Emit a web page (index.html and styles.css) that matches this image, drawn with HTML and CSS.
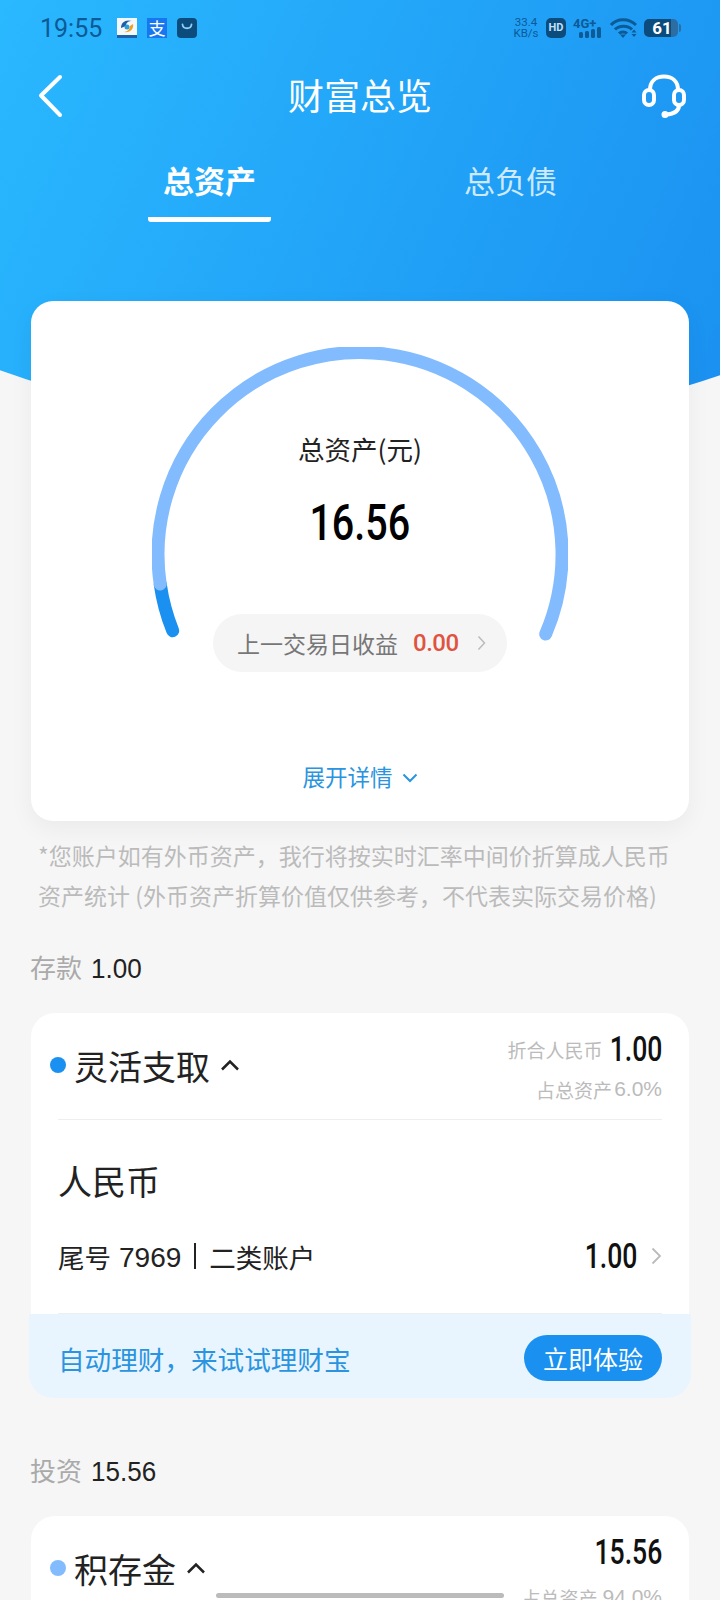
FILE: index.html
```html
<!DOCTYPE html>
<html lang="zh-CN">
<head>
    <meta charset="UTF-8">
    <meta name="viewport" content="width=device-width, initial-scale=1.0">
    <title>财富总览</title>
    <link rel="stylesheet" href="styles.css">
</head>
<body>
    <div class="page">
        <header class="hero">
            <div class="status-bar">
                <div class="status-left">
                    <span class="clock">19:55</span>
                    <svg class="app-icon" viewBox="0 0 20 20">
                        <rect width="20" height="20" fill="#f4f8fb"/>
                        <rect y="17" width="20" height="3" fill="#1d5fa8"/>
                        <path d="M4 10C4 4 9 1 15 3c-3 0-6 1-6 5z" fill="#1d5fa8"/>
                        <path d="M16 6c1 5-3 9-9 8 3-.5 6-2 6-6z" fill="#f0a01e"/>
                        <circle cx="10" cy="9" r="2.500" fill="#2a9fd8"/>
                    </svg>
                    <span class="app-icon alipay">支</span>
                    <svg class="app-icon" viewBox="0 0 20 20">
                        <rect width="20" height="20" rx="4" fill="#0c4c7c"/>
                        <path d="M5.500 6.500c.5 5 8.500 5 9 0" fill="none" stroke="#8ad0f8" stroke-width="1.800" stroke-linecap="round"/>
                    </svg>
                </div>
                <div class="status-right">
                    <span class="net-speed">33.4<br>KB/s</span>
                    <span class="hd">HD</span>
                    <svg class="signal" width="30" height="24" viewBox="0 0 30 24">
                        <text x="0" y="12" class="signal-text">4G+</text>
                        <rect x="6" y="16" width="4" height="6" rx="1.500"/>
                        <rect x="12" y="15" width="4" height="7" rx="1.500"/>
                        <rect x="18" y="13" width="4" height="9" rx="1.500"/>
                        <rect x="24" y="11" width="4" height="11" rx="1.500"/>
                    </svg>
                    <svg class="wifi" width="27" height="20" viewBox="0 0 27 20">
                        <path d="M1 7c6-7 18-7 25 0M5 11.500c4-4.500 13-4.500 17 0M9 15.500c2-2 6-2 8 0" fill="none" stroke="#0c5a96" stroke-width="3"/>
                        <path d="M10 16.500h6l-3 3.500zM21.500 14.500l2.500-3 2.500 3zM21.500 16h5L24 19z" fill="#0c5a96"/>
                    </svg>
                    <span class="battery">61</span>
                </div>
            </div>

            <nav class="nav-bar">
                <svg class="nav-back" width="28" height="44" viewBox="0 0 28 44">
                    <path d="M23 3 4 21.500 23 41" fill="none" stroke="#fff" stroke-width="4" stroke-linecap="round" stroke-linejoin="round"/>
                </svg>
                <h1 class="nav-title">财富总览</h1>
                <svg class="nav-help" width="46" height="44" viewBox="0 0 46 44">
                    <path d="M9 16C9 7 15 2.500 23 2.500S37 7 37 16" fill="none" stroke="#fff" stroke-width="4"/>
                    <rect x="3" y="16" width="10" height="15" rx="5" fill="none" stroke="#fff" stroke-width="4"/>
                    <rect x="33" y="16" width="10" height="15" rx="5" fill="none" stroke="#fff" stroke-width="4"/>
                    <path d="M38 31c0 6-4 9-13 9.500" fill="none" stroke="#fff" stroke-width="4"/>
                    <circle cx="24" cy="40.500" r="3.500" fill="#fff"/>
                </svg>
            </nav>

            <div class="tabs">
                <div class="tab active">总资产</div>
                <div class="tab">总负债</div>
            </div>
        </header>

        <section class="summary-card">
            <div class="gauge">
                <svg class="gauge-ring" width="416" height="325" viewBox="0 0 416 325">
                    <!-- dark piece first so the light ring's round cap sits on top -->
                    <path d="M20.700 283.700A202 202 0 0 1 8.200 237" fill="none" stroke="#1a91f0" stroke-width="13" stroke-linecap="round"/>
                    <path d="M8.200 237A202 202 0 1 1 393.700 287" fill="none" stroke="#82bcff" stroke-width="13" stroke-linecap="round"/>
                </svg>
                <div class="gauge-label">总资产(元)</div>
                <div class="gauge-value">16.56</div>
                <div class="gauge-pill">
                    <span>上一交易日收益</span>
                    <span class="pill-amount">0.00</span>
                    <svg width="9" height="16" viewBox="0 0 9 16">
                        <path d="M1.500 1.500 7.500 8l-6 6.500" fill="none" stroke="#bbb" stroke-width="1.500"/>
                    </svg>
                </div>
            </div>
            <div class="expand">
                <span>展开详情</span>
                <svg width="16" height="10" viewBox="0 0 16 10">
                    <path d="M1.500 1.500 8 8l6.500-6.500" fill="none" stroke="#2a94e0" stroke-width="2"/>
                </svg>
            </div>
        </section>

        <p class="note">*您账户如有外币资产，我行将按实时汇率中间价折算成人民币<br>资产统计 (外币资产折算价值仅供参考，不代表实际交易价格)</p>

        <div class="section-title"><span>存款</span><span class="section-amount">1.00</span></div>

        <section class="asset-card">
            <div class="asset-head">
                <div class="asset-name">
                    <span class="dot"></span>
                    <span>灵活支取</span>
                    <svg class="caret" width="20" height="12" viewBox="0 0 20 12">
                        <path d="M2 10.500 10 2.500l8 8" fill="none" stroke="#222" stroke-width="2.500"/>
                    </svg>
                </div>
                <div class="asset-figures">
                    <div class="figure-line"><span class="hint">折合人民币</span><span class="figure">1.00</span></div>
                    <div class="figure-line hint">占总资产<span class="narrow">6.0%</span></div>
                </div>
            </div>
            <div class="divider"></div>
            <div class="currency">人民币</div>
            <div class="account-row">
                <div class="account-id">
                    <span>尾号</span>
                    <span class="account-no">7969</span>
                    <span class="account-sep"></span>
                    <span>二类账户</span>
                </div>
                <div class="account-amount">
                    <span class="figure">1.00</span>
                    <svg width="11" height="18" viewBox="0 0 11 18">
                        <path d="M1.500 1.500 9 9l-7.500 7.500" fill="none" stroke="#bbb" stroke-width="1.800"/>
                    </svg>
                </div>
            </div>
            <div class="divider"></div>
            <div class="promo">
                <span>自动理财，来试试理财宝</span>
                <span class="promo-btn">立即体验</span>
            </div>
        </section>

        <div class="section-title invest"><span>投资</span><span class="section-amount">15.56</span></div>

        <section class="asset-card">
            <div class="asset-head">
                <div class="asset-name">
                    <span class="dot light"></span>
                    <span>积存金</span>
                    <svg class="caret" width="20" height="12" viewBox="0 0 20 12">
                        <path d="M2 10.500 10 2.500l8 8" fill="none" stroke="#222" stroke-width="2.500"/>
                    </svg>
                </div>
                <div class="asset-figures">
                    <div class="figure-line"><span class="figure">15.56</span></div>
                    <div class="figure-line hint spaced">占总资产 <span class="narrow">94.0%</span></div>
                </div>
            </div>
        </section>

        <div class="home-bar"></div>
    </div>
</body>
</html>
```

FILE: styles.css
```css
* { box-sizing: border-box; }
html, body {
    margin: 0;
    height: 1600px;
    overflow: hidden;
}
body {
    background: #f6f6f6;
    font-family: "Noto Sans CJK SC", "Noto Sans", sans-serif;
    color: #222;
}
.page {
    position: relative;
    height: 1600px;
    overflow: hidden;
}

/* blue header with the curved lower edge */
.hero {
    position: relative;
    height: 301px;
    color: #fff;
}
.hero::before {
    content: "";
    position: absolute;
    left: 0;
    top: 0;
    width: 720px;
    height: 440px;
    background: linear-gradient(115deg, #2ab8ff 0%, #1a90f0 100%);
    clip-path: circle(1090px at 367px -656px);
}
.hero > * { position: relative; }

.status-bar {
    height: 56px;
    padding: 0 40px;
    display: flex;
    justify-content: space-between;
    align-items: center;
    color: #0c5a96;
}
.status-left {
    display: flex;
    align-items: center;
    gap: 10px;
}
.clock {
    font-family: Roboto, sans-serif;
    font-size: 25px;
    width: 67px;
}
.app-icon {
    display: block;
    width: 20px;
    height: 20px;
}
.alipay {
    background: #1677f0;
    color: #fff;
    font-size: 17px;
    line-height: 20px;
    text-align: center;
}
.status-right {
    display: flex;
    align-items: center;
    gap: 7px;
}
.net-speed {
    font-family: Roboto, sans-serif;
    font-size: 11.500px;
    line-height: 11px;
    text-align: center;
    width: 26px;
}
.hd {
    width: 20px;
    height: 20px;
    border-radius: 5px;
    background: #0c4c7c;
    color: #bfe2fa;
    font-family: Roboto, sans-serif;
    font-size: 11px;
    font-weight: 700;
    line-height: 20px;
    text-align: center;
}
.signal { fill: #0c5a96; }
.signal-text {
    font-family: Roboto, sans-serif;
    font-size: 13px;
    font-weight: 700;
}
.battery {
    position: relative;
    width: 34px;
    height: 18px;
    margin-right: 2px;
    border-radius: 5px;
    background: linear-gradient(90deg, #0c4c7c 80%, #2a6ea3 80%);
    color: #fff;
    font-family: Roboto, sans-serif;
    font-size: 17px;
    font-weight: 700;
    line-height: 18px;
    padding-left: 2px;
    text-align: center;
}
.battery::after {
    content: "";
    position: absolute;
    right: -3px;
    top: 5px;
    width: 2px;
    height: 8px;
    border-radius: 0 2px 2px 0;
    background: #2a6ea3;
}

.nav-bar {
    height: 56px;
    margin-top: 12px;
    padding: 0 37px;
    display: grid;
    grid-template-columns: 1fr auto 1fr;
    align-items: center;
}
.nav-help {
    justify-self: end;
    margin-right: -4px;
}
.nav-title {
    margin: 0 0 4px;
    font-size: 36px;
    font-weight: 400;
    line-height: 52px;
}

.tabs {
    margin-top: 24px;
    padding-left: 148px;
    display: flex;
    gap: 178px;
}
.tab {
    width: 123px;
    height: 74px;
    text-align: center;
    font-size: 31px;
    line-height: 64px;
    color: #cfeaff;
}
.tab.active {
    color: #fff;
    font-weight: 700;
    border-bottom: 5px solid #fff;
    border-radius: 0 0 3px 3px;
}

/* total assets card */
.summary-card {
    position: relative;
    height: 520px;
    margin: 0 31px;
    padding-top: 46px;
    background: #fff;
    border-radius: 22px;
    box-shadow: 0 8px 24px rgba(0,0,0,0.05);
}
.gauge {
    position: relative;
    width: 416px;
    height: 325px;
    margin: 0 auto;
    padding-top: 84px;
    display: flex;
    flex-direction: column;
    align-items: center;
}
.gauge-ring {
    position: absolute;
    left: 0;
    top: 0;
}
.gauge-label {
    font-size: 26.500px;
    line-height: 36px;
}
.gauge-value {
    margin-top: 26px;
    font-family: Roboto, sans-serif;
    font-size: 50px;
    font-weight: 500;
    line-height: 60px;
    color: #000;
    transform: scaleX(0.79);
}
.gauge-pill {
    margin-top: 61px;
    width: 294px;
    height: 58px;
    padding-left: 24px;
    display: flex;
    align-items: center;
    border-radius: 29px;
    background: #f5f5f5;
    color: #777;
    font-size: 23px;
}
.pill-amount {
    margin: 0 18px 0 15px;
    color: #e0533f;
    font-family: Roboto, sans-serif;
    font-size: 24px;
    font-weight: 500;
    letter-spacing: -0.5px;
}
.expand {
    margin-top: 89px;
    display: flex;
    justify-content: center;
    align-items: center;
    gap: 9px;
    color: #2a94e0;
    font-size: 22.500px;
    line-height: 30px;
}
.expand svg { margin-top: 4px; }

.note {
    margin: 14px 0 0;
    padding-left: 38px;
    font-size: 23px;
    line-height: 40px;
    color: #bbb;
    white-space: nowrap;
}

.section-title {
    height: 36px;
    margin-top: 35px;
    padding-left: 30px;
    display: flex;
    align-items: baseline;
    gap: 9px;
    font-size: 26px;
    line-height: 34px;
    color: #aaa;
}
.section-title.invest { margin-top: 55px; }
.section-amount {
    display: inline-block;
    font-family: "Liberation Sans", sans-serif;
    font-size: 28px;
    color: #222;
    transform: scaleX(0.93);
    transform-origin: left center;
}

/* account cards */
.asset-card {
    margin: 27px 31px 0;
    background: #fff;
    border-radius: 24px;
}
.asset-head {
    height: 106px;
    padding: 16px 27px 0 19px;
    display: flex;
    justify-content: space-between;
}
.asset-name {
    height: 72px;
    display: flex;
    align-items: center;
    font-size: 34px;
}
.dot {
    width: 16px;
    height: 16px;
    margin-right: 8px;
    border-radius: 50%;
    background: #1a91f0;
}
.dot.light { background: #82bcff; }
.caret { margin-left: 10px; }
.asset-figures { text-align: right; }
.figure-line {
    display: flex;
    justify-content: flex-end;
    align-items: center;
    gap: 7px;
    height: 40px;
}
.figure-line.spaced { margin-top: 5px; }
.hint {
    font-size: 19px;
    color: #bbb;
}
.figure-line.hint { gap: 2px; }
.figure-line.spaced { gap: 5px; }
.narrow {
    font-family: "Liberation Sans", sans-serif;
    font-size: 21px;
}
.figure {
    display: inline-block;
    margin-left: -17px;
    font-family: Roboto, sans-serif;
    font-size: 35px;
    font-weight: 500;
    color: #111;
    transform: scaleX(0.76);
    transform-origin: right center;
}
.divider {
    height: 1px;
    margin: 0 27px;
    background: #eee;
}
.currency {
    margin: 36px 0 0 27px;
    font-size: 34px;
    line-height: 50px;
}
.account-row {
    margin: 30px 27px 37px;
    display: flex;
    justify-content: space-between;
    align-items: center;
    height: 40px;
    font-size: 26.500px;
}
.account-id {
    display: flex;
    align-items: center;
}
.account-no {
    margin: 4px 0 0 8px;
    font-family: "Liberation Sans", sans-serif;
    font-size: 28px;
}
.account-sep {
    width: 2px;
    height: 26px;
    margin: 0 13px;
    background: #222;
}
.account-amount {
    display: flex;
    align-items: center;
    gap: 14px;
}
.promo {
    height: 84px;
    margin: 0 -2px;
    padding: 4px 29px 0 29px;
    display: flex;
    justify-content: space-between;
    align-items: center;
    background: #e9f5fe;
    border-radius: 0 0 24px 24px;
    color: #2a94e0;
    font-size: 26.600px;
}
.promo-btn {
    width: 138px;
    height: 46px;
    border-radius: 23px;
    background: #1a91f0;
    color: #fff;
    font-size: 25px;
    line-height: 46px;
    text-align: center;
}

.home-bar {
    position: absolute;
    left: 216px;
    top: 1593px;
    width: 288px;
    height: 5px;
    border-radius: 3px;
    background: #bbb;
}
```
